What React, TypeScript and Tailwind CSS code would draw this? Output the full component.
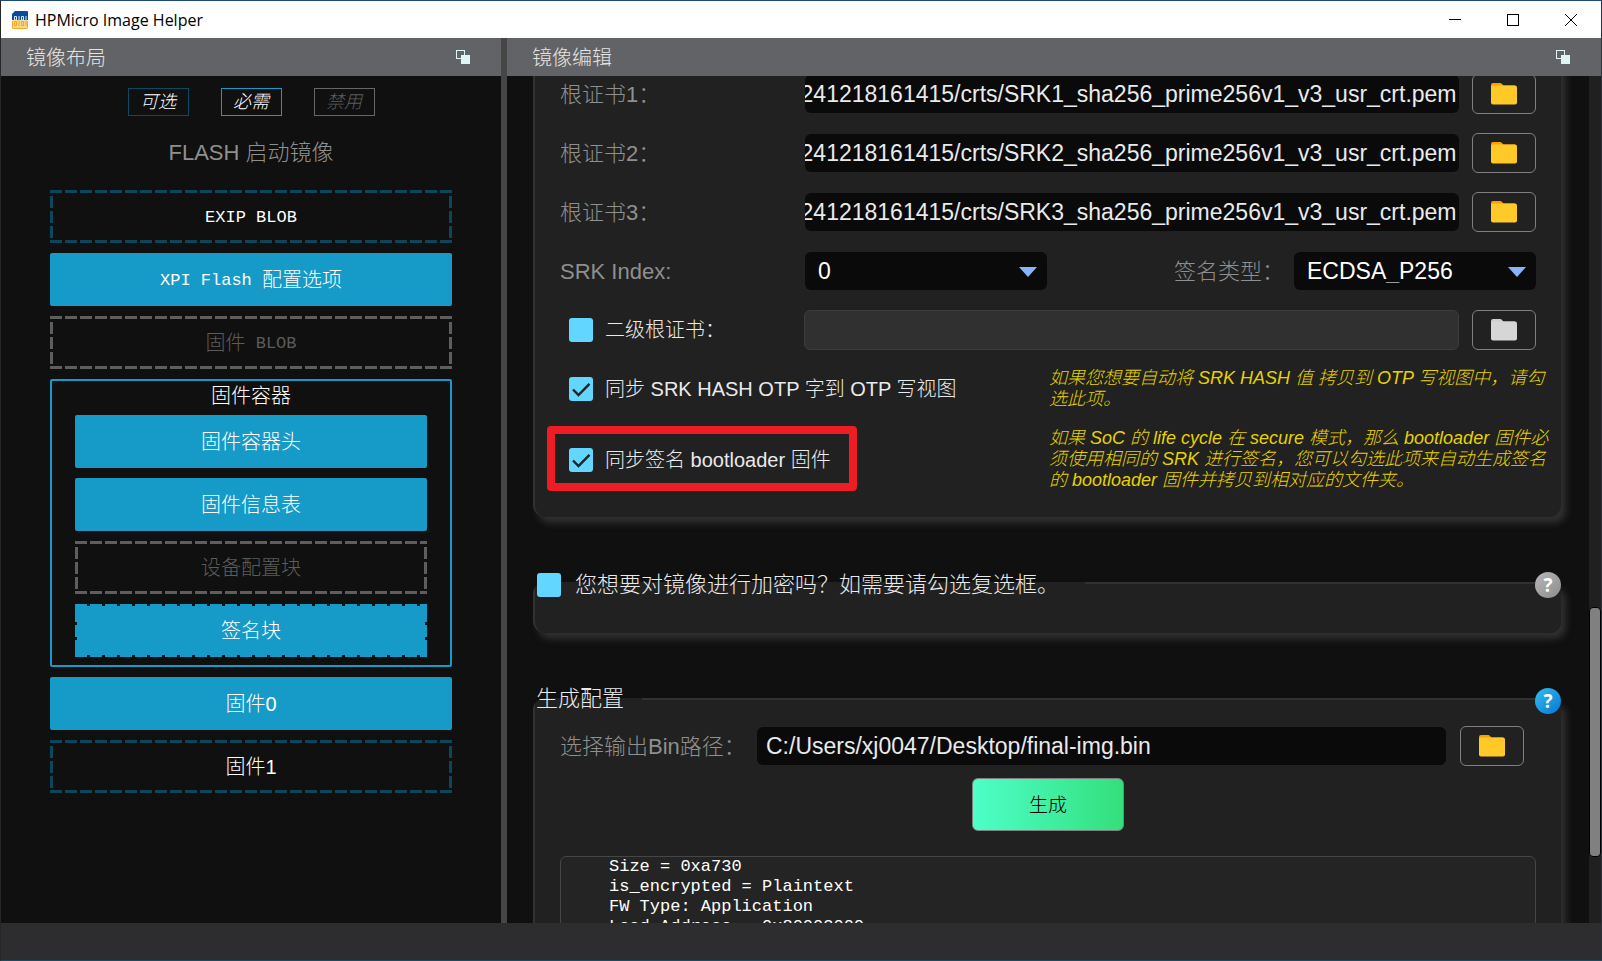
import { useEffect, useRef } from "react";
import type { ReactNode } from "react";

type BlockKind = "required" | "optional" | "disabled" | "requiredOptional";

const DASH =
  "[background-image:repeating-linear-gradient(90deg,var(--dash)_0_12px,var(--gap)_12px_15px),repeating-linear-gradient(90deg,var(--dash)_0_12px,var(--gap)_12px_15px),repeating-linear-gradient(180deg,var(--dash)_0_12px,var(--gap)_12px_15px),repeating-linear-gradient(180deg,var(--dash)_0_12px,var(--gap)_12px_15px)] bg-no-repeat [background-position:0_0,0_100%,0_50%,100%_50%]";

const DASH_THICK = "[background-size:100%_3px,100%_3px,3px_42px,3px_42px]";
const DASH_THIN = "[background-size:100%_2px,100%_2px,2px_42px,2px_42px]";

const BLOCK_STYLES: Record<BlockKind, string> = {
  required: "rounded-[2px] bg-[#169ac7] text-white",
  optional: `${DASH} ${DASH_THICK} [--dash:#0b465b] [--gap:transparent] text-white`,
  disabled: `${DASH} ${DASH_THICK} [--dash:#5e5e5e] [--gap:transparent] text-[#5c5c5c]`,
  requiredOptional: `${DASH} ${DASH_THIN} [--dash:#169ac7] [--gap:#101010] bg-[#169ac7] text-white`,
};

/** 镜像布局中的一个块 */
function Block({ kind, children }: { kind: BlockKind; children: ReactNode }) {
  return (
    <button
      type="button"
      disabled={kind === "disabled"}
      className={`flex h-[53px] w-full items-center justify-center text-[20px] font-light ${BLOCK_STYLES[kind]}`}
    >
      {children}
    </button>
  );
}

/** 块名称中的等宽西文 */
function Mono({ children }: { children: string }) {
  return (
    <span className="whitespace-pre pt-[3px] font-['Liberation_Mono',monospace] text-[17px]">{children}</span>
  );
}

function PanelHeader({ title }: { title: string }) {
  return (
    <header className="flex h-[38px] shrink-0 items-center justify-between bg-[#626366] pl-[25px] pr-[31px]">
      <h2 className="pt-[2px] text-[20px] font-light leading-none text-[#e4e4e4]">{title}</h2>
      <button type="button" aria-label={`浮动 ${title}`}>
        <svg width="14" height="14" viewBox="0 0 14 14">
          <rect x="0.5" y="0.5" width="8" height="8" fill="none" stroke="#dff5f5" />
          <rect x="5" y="5" width="9" height="9" fill="#dff5f5" />
        </svg>
      </button>
    </header>
  );
}

function FolderButton({ label, disabled = false }: { label: string; disabled?: boolean }) {
  return (
    <button
      type="button"
      aria-label={label}
      disabled={disabled}
      className="flex h-10 w-16 shrink-0 items-center justify-center rounded-md border border-[#808080]"
    >
      <svg width="26" height="22" viewBox="0 0 26 22">
        <path
          d="M2 0h7.2a2 2 0 0 1 1.5.7L12.5 2.6H24V9H0V2a2 2 0 0 1 2-2z"
          fill={disabled ? "#cfcfcf" : "#ffa000"}
        />
        <rect y="2.6" width="26" height="19" rx="2" fill={disabled ? "#d6d6d6" : "#ffca28"} />
      </svg>
    </button>
  );
}

function CheckBox({ id, checked = false }: { id: string; checked?: boolean }) {
  return (
    <span className="relative flex size-6 shrink-0">
      <input
        id={id}
        type="checkbox"
        defaultChecked={checked}
        className="peer size-6 appearance-none rounded-[3px] bg-[#62d6ff]"
      />
      <svg
        viewBox="0 0 24 24"
        className="pointer-events-none absolute inset-0 hidden size-6 peer-checked:block"
        fill="none"
        stroke="#212121"
        strokeWidth="2.4"
      >
        <path d="M4 12.5l5.5 5.5L20.5 6.8" />
      </svg>
    </span>
  );
}

/** 路径较长时显示末尾部分 */
function PathInput({ id, value }: { id: string; value: string }) {
  const ref = useRef<HTMLInputElement>(null);

  useEffect(() => {
    if (ref.current) {
      ref.current.scrollLeft = ref.current.scrollWidth;
    }
  }, []);

  return (
    <input
      ref={ref}
      id={id}
      type="text"
      defaultValue={value}
      className="h-[38px] min-w-0 flex-1 rounded-md bg-[#0a0a0a] pr-[2px] text-[23px] text-[#e9eaec] outline-none"
    />
  );
}

function Select({ id, options }: { id: string; options: string[] }) {
  return (
    <span className="relative flex w-[242px]">
      <select
        id={id}
        className="h-[38px] w-full appearance-none rounded-md bg-[#0a0a0a] px-[13px] text-[23px] leading-none text-white"
      >
        {options.map((option) => (
          <option key={option}>{option}</option>
        ))}
      </select>
      <svg
        width="18"
        height="10"
        viewBox="0 0 18 10"
        className="pointer-events-none absolute right-[10px] top-[15px]"
      >
        <path d="M0 0h18L9 10z" fill="#8ab4f8" />
      </svg>
    </span>
  );
}

function HelpButton({ active = false }: { active?: boolean }) {
  return (
    <button
      type="button"
      aria-label="帮助"
      className={`absolute right-0 -top-[28px] flex size-[26px] items-center justify-center rounded-full font-['Open_Sans',sans-serif] text-[19px] font-bold leading-none text-white ${
        active
          ? "bg-linear-to-br from-[#33bef0] to-[#0a76d2]"
          : "bg-linear-to-br from-[#b8b8b8] to-[#8c8c8c]"
      }`}
    >
      ?
    </button>
  );
}

const GROUP =
  "relative min-w-0 rounded-[12px] border-2 border-r-0 border-b-0 border-[#313131] bg-[#212121] px-[25px] shadow-[5px_6px_7px_0_#303030]";

const CERTS = ["1", "2", "3"];

const LOG = `Size = 0xa730
is_encrypted = Plaintext
FW Type: Application
Load Address = 0x80003000`;

function LayoutPanel() {
  return (
    <section className="flex w-[500px] shrink-0 flex-col bg-[#101010]">
      <PanelHeader title="镜像布局" />
      <div className="flex flex-col items-center px-[49px]">
        <div className="mt-3 flex justify-center gap-8 text-[18px] font-light italic leading-none">
          <span className="flex h-7 w-[61px] items-center justify-center border border-[#0c4a60] text-white">可选</span>
          <span className="flex h-7 w-[61px] items-center justify-center border border-[#169ac7] text-white">必需</span>
          <span className="flex h-7 w-[61px] items-center justify-center border border-[#666666] text-[#5c5c5c]">禁用</span>
        </div>
        <h1 className="mt-[21px] text-[22px] font-light leading-8 text-[#8f8f8f]">FLASH 启动镜像</h1>
        <div className="mt-[21px] flex w-full flex-col gap-[10px]">
          <Block kind="optional">
            <Mono>EXIP BLOB</Mono>
          </Block>
          <Block kind="required">
            <Mono>XPI Flash </Mono>配置选项
          </Block>
          <Block kind="disabled">
            固件<Mono> BLOB</Mono>
          </Block>
          <div className="flex flex-col gap-[10px] rounded-[2px] border-2 border-[#169ac7] px-[23px] pb-2">
            <h3 className="-mb-[10px] pb-1 text-center text-[20px] font-light leading-[30px] text-white">固件容器</h3>
            <Block kind="required">固件容器头</Block>
            <Block kind="required">固件信息表</Block>
            <Block kind="disabled">设备配置块</Block>
            <Block kind="requiredOptional">签名块</Block>
          </div>
          <Block kind="required">固件0</Block>
          <Block kind="optional">固件1</Block>
        </div>
      </div>
    </section>
  );
}

function SignGroup() {
  return (
    <div className={`${GROUP} -mt-4 pb-[26px] pt-3`}>
      <div className="flex flex-col gap-[19px]">
        {CERTS.map((n) => (
          <div key={n} className="flex h-10 items-center">
            <label htmlFor={`srk-${n}`} className="w-[245px] text-[22px] font-light text-[#8f8f8f]">
              根证书{n}：
            </label>
            <PathInput id={`srk-${n}`} value={`20241218161415/crts/SRK${n}_sha256_prime256v1_v3_usr_crt.pem`} />
            <span className="ml-[13px] flex">
              <FolderButton label={`浏览根证书${n}`} />
            </span>
          </div>
        ))}
        <div className="flex h-10 items-center">
          <label htmlFor="srk-index" className="w-[245px] text-[22px] text-[#8f8f8f]">
            SRK Index:
          </label>
          <Select id="srk-index" options={["0", "1", "2", "3"]} />
          <label htmlFor="sign-type" className="ml-auto mr-[10px] text-[22px] font-light text-[#8f8f8f]">
            签名类型：
          </label>
          <Select id="sign-type" options={["ECDSA_P256"]} />
        </div>
        <div className="flex h-10 items-center">
          <div className="flex w-[244px] items-center gap-3 pl-[9px]">
            <CheckBox id="second-cert" />
            <label htmlFor="second-cert" className="text-[20px] font-light text-[#e9eaec]">
              二级根证书：
            </label>
          </div>
          <input
            type="text"
            disabled
            aria-label="二级根证书路径"
            className="h-10 min-w-0 flex-1 rounded-md border border-[#3c3c3c] bg-[#303030]"
          />
          <span className="ml-[13px] flex">
            <FolderButton label="浏览二级根证书" disabled />
          </span>
        </div>
      </div>

      <div className="mt-[18px] flex flex-col gap-[18px]">
        <div className="flex items-center">
          <div className="flex flex-1 items-center gap-3 pl-[9px]">
            <CheckBox id="sync-otp" checked />
            <label htmlFor="sync-otp" className="text-[20px] font-light text-[#e9eaec]">
              同步 SRK HASH OTP 字到 OTP 写视图
            </label>
          </div>
          <p className="w-[487px] whitespace-nowrap text-[18px] font-light italic leading-[21px] text-[#e6d200]">
            如果您想要自动将 SRK HASH 值 拷贝到 OTP 写视图中，请勾
            <br />
            选此项。
          </p>
        </div>
        <div className="flex items-center">
          <div className="relative flex flex-1 items-center gap-3 pl-[9px]">
            <CheckBox id="sync-bootloader" checked />
            <label htmlFor="sync-bootloader" className="text-[20px] font-light text-[#e9eaec]">
              同步签名 bootloader 固件
            </label>
            {/* 红色标注框 */}
            <span className="pointer-events-none absolute -left-[13px] -top-[19px] h-[65px] w-[310px] rounded-[4px] border-8 border-[#ee1c24]" />
          </div>
          <p className="w-[487px] whitespace-nowrap text-[18px] font-light italic leading-[21px] text-[#e6d200]">
            如果 SoC 的 life cycle 在 secure 模式，那么 bootloader 固件必
            <br />
            须使用相同的 SRK 进行签名，您可以勾选此项来自动生成签名
            <br />
            的 bootloader 固件并拷贝到相对应的文件夹。
          </p>
        </div>
      </div>
    </div>
  );
}

function EditPanel() {
  return (
    <section className="flex min-w-0 flex-1 flex-col bg-[#101010]">
      <PanelHeader title="镜像编辑" />
      <div className="flex min-h-0 flex-1">
        <div className="min-w-0 flex-1 overflow-hidden pl-[26px] pr-7">
          <SignGroup />

          <fieldset className={`${GROUP} mt-[49px] pb-[33px]`}>
            <legend className="-ml-[25px] flex h-[34px] items-center gap-[14px] pl-[2px] pr-[26px] pt-[3px]">
              <CheckBox id="encrypt" />
              <label htmlFor="encrypt" className="text-[22px] font-light leading-none text-[#e9eaec]">
                您想要对镜像进行加密吗？如需要请勾选复选框。
              </label>
            </legend>
            <HelpButton />
          </fieldset>

          <fieldset className={`${GROUP} mt-[49px] pb-6`}>
            <legend className="-ml-[25px] flex h-[34px] items-center pl-px pr-[18px] text-[22px] font-light leading-none text-[#e9eaec]">
              生成配置
            </legend>
            <HelpButton active />
            <div className="mt-[10px] flex h-10 items-center pr-3">
              <label htmlFor="output" className="w-[197px] text-[22px] font-light text-[#8f8f8f]">
                选择输出Bin路径：
              </label>
              <input
                id="output"
                type="text"
                defaultValue="C:/Users/xj0047/Desktop/final-img.bin"
                className="h-[38px] min-w-0 flex-1 rounded-md bg-[#0a0a0a] px-[9px] text-[23px] text-[#e9eaec]"
              />
              <span className="ml-[14px] flex">
                <FolderButton label="浏览输出路径" />
              </span>
            </div>
            <div className="mt-3 flex justify-center">
              <button
                type="button"
                className="h-[53px] w-[152px] rounded-md border border-[#808080] bg-linear-to-r from-[#4dffc8] to-[#34df7b] pt-1 text-[19px] font-light text-black"
              >
                生成
              </button>
            </div>
            <pre className="mt-[25px] h-[300px] rounded-md border border-[#464646] bg-[#242424] pl-12 font-['Liberation_Mono',monospace] text-[17px] leading-5 text-white">
              {LOG}
            </pre>
          </fieldset>
        </div>

        {/* 滚动条 */}
        <div className="flex w-3 shrink-0 flex-col bg-[#202020]">
          <div className="grow-[532]" />
          <div className="h-[250px] rounded-[4px] border border-black bg-[#808080]" />
          <div className="grow-[66]" />
        </div>
      </div>
    </section>
  );
}

function TitleBar() {
  return (
    <div className="flex h-[37px] shrink-0 items-center bg-white pl-[11px] text-black">
      <svg width="16" height="18" viewBox="0 0 16 18">
        <path d="M3 0h12a1 1 0 0 1 1 1v8H0V3z" fill="#0b4a9a" />
        <rect y="9" width="16" height="9" rx="1.5" fill="#f9d68c" />
        <path d="M2.5 5.5h2V9h-2zM7 5v4M9.500 5.500h2V9h-2zM14 5v4" fill="none" stroke="#dce9f7" />
        <path
          d="M2.5 10.500h2v4h-2zM7 10v5M9.500 10.500h2v4h-2zM14 10v5M.5 10v6.500a1 1 0 0 0 1 1h13a1 1 0 0 0 1-1V10"
          fill="none"
          stroke="#f3a61e"
        />
      </svg>
      <span className="ml-[7px] font-['Open_Sans',sans-serif] text-[16px] leading-none">HPMicro Image Helper</span>
      <div className="ml-auto flex h-full pr-px">
        <button type="button" aria-label="最小化" className="flex w-[58px] items-center justify-center">
          <svg width="12" height="12" viewBox="0 0 12 12" stroke="#000" fill="none">
            <path d="M0 5.500h12" />
          </svg>
        </button>
        <button type="button" aria-label="最大化" className="flex w-[58px] items-center justify-center">
          <svg width="12" height="12" viewBox="0 0 12 12" stroke="#000" fill="none">
            <rect x="0.5" y="0.5" width="11" height="11" />
          </svg>
        </button>
        <button type="button" aria-label="关闭" className="flex w-[58px] items-center justify-center">
          <svg width="12" height="12" viewBox="0 0 12 12" stroke="#000" fill="none">
            <path d="M0 0l12 12M12 0L0 12" />
          </svg>
        </button>
      </div>
    </div>
  );
}

export default function App() {
  return (
    <div
      lang="zh-CN"
      className="flex h-screen flex-col border border-b-[#1c4a63] border-l-[#262626] border-r-[#22345c] border-t-[#1d4b75] bg-[#2d2d2f] font-['Liberation_Sans','Noto_Sans_CJK_SC',sans-serif]"
    >
      <TitleBar />
      <main className="flex min-h-0 flex-1">
        <LayoutPanel />
        <div className="w-[6px] shrink-0 bg-[#464646]" />
        <EditPanel />
      </main>
      <footer className="h-[37px] shrink-0 bg-[#2d2d2f]" />
    </div>
  );
}
